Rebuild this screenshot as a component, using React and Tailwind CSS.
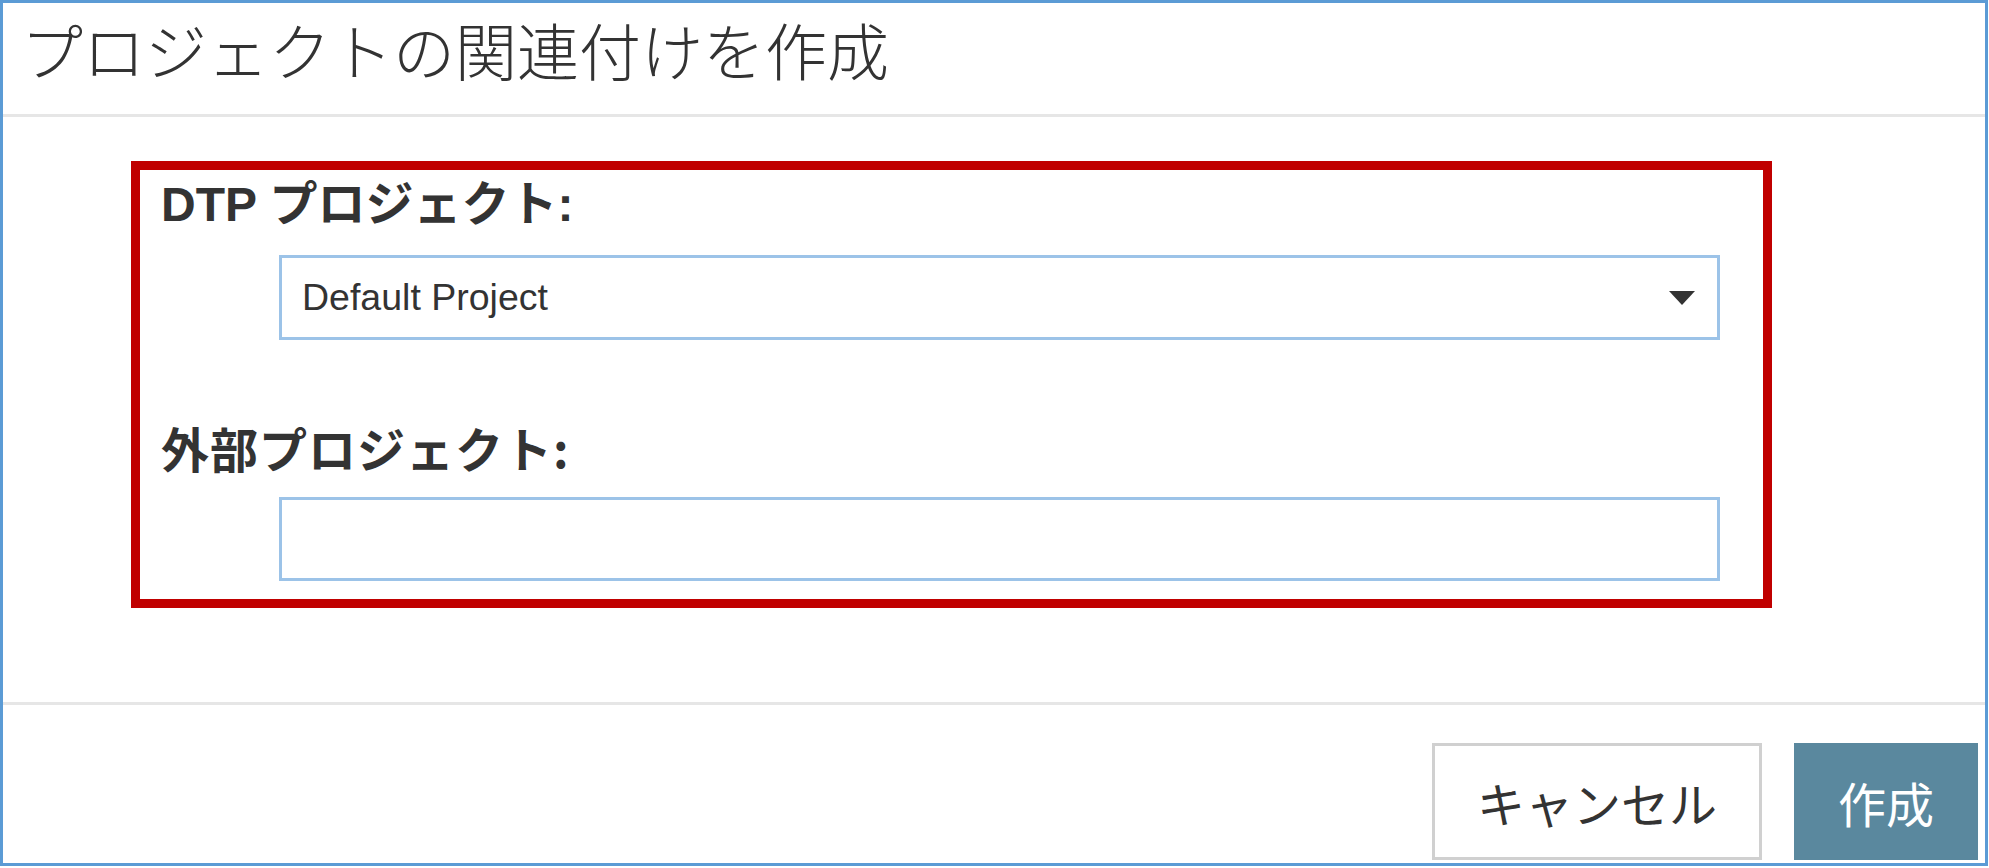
export default function App() {
  const jp = { fontFamily: '"Noto Sans CJK JP", "Liberation Sans", sans-serif' };
  const mixed = { fontFamily: '"Liberation Sans", "Noto Sans CJK JP", sans-serif' };
  return (
    <div className="w-[1989px] h-[868px] bg-white">
      <div className="w-[1988px] h-[866px] border-[3px] border-[#5b9bd5] box-border flex flex-col bg-white">
        <div className="h-[114px] border-b-[3px] border-[#e6e6e6] flex items-center pl-[18px] shrink-0">
          <h1 className="text-[62px] leading-none font-light text-[#333] -mt-[20px]" style={jp}>
            プロジェクトの関連付けを作成
          </h1>
        </div>
        <div className="h-[585px] shrink-0 pt-[44px] pl-[128px]">
          <div className="w-[1641px] border-[9px] border-[#c00000] pt-[11px] pb-[18px] pl-[21px] flex flex-col">
            <label className="text-[48px] leading-[48px] font-bold text-[#333]" style={mixed}>
              DTP プロジェクト:
            </label>
            <div className="mt-[26px] ml-[118px] w-[1441px] h-[85px] border-[3px] border-[#9cc3e8] flex items-center justify-between pl-[20px] pr-[22px]">
              <span className="text-[37.5px] text-[#333]" style={mixed}>Default Project</span>
              <svg width="26" height="14" viewBox="0 0 26 14">
                <polygon points="0,0 26,0 13,14" fill="#333" />
              </svg>
            </div>
            <label className="mt-[83px] text-[48px] leading-[48px] font-bold text-[#333] tracking-[1px]" style={jp}>
              外部プロジェクト:
            </label>
            <div className="mt-[26px] ml-[118px] w-[1441px] h-[84px] border-[3px] border-[#9cc3e8]" />
          </div>
        </div>
        <div className="border-t-[3px] border-[#e6e6e6] flex-1 flex justify-end items-end gap-[32px] pr-[7px] pb-[3px]">
          <button className="w-[330px] h-[117px] border-[3px] border-[#d0d0d0] bg-white text-[48px] text-[#333] flex items-center justify-center" style={jp}>
            キャンセル
          </button>
          <button className="w-[184px] h-[117px] bg-[#5a889e] text-white text-[48px] flex items-center justify-center" style={jp}>
            作成
          </button>
        </div>
      </div>
    </div>
  );
}
